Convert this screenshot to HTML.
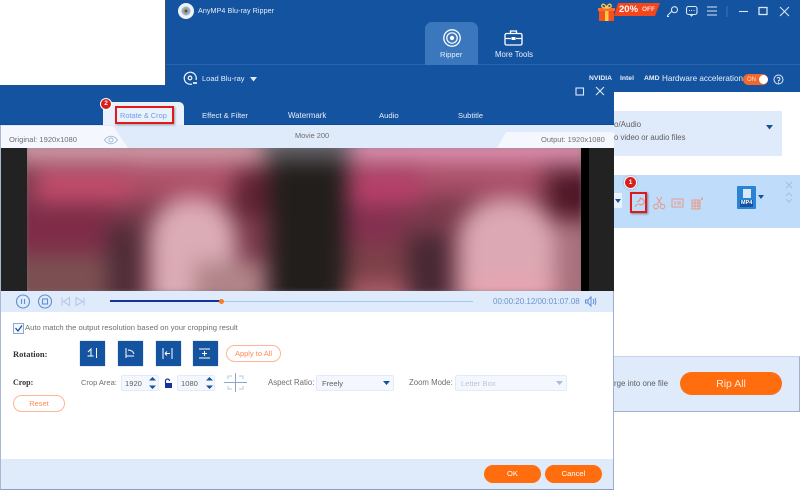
<!DOCTYPE html>
<html><head><meta charset="utf-8">
<style>
html,body{margin:0;padding:0;width:800px;height:490px;overflow:hidden;background:#fff}
body{font-family:"Liberation Sans",sans-serif;font-size:7.6px;color:#5f5f5f;position:relative;filter:blur(.2px)}
.a,.t{position:absolute}
.t{white-space:nowrap;line-height:10px}
.w{color:#e8eefa}
.btn{position:absolute;background:#ff6d0e;border-radius:12px;color:#fff;text-align:center}
.ob{position:absolute;border:1px solid #ffb594;border-radius:10px;color:#ff8a55;text-align:center;background:#fff;box-sizing:border-box}
.rot{position:absolute;width:25px;height:25px;top:341px;background:#14539f;box-shadow:0 0 1px #7f9fca}
.inp{position:absolute;background:#f4f8fe;border:1px solid #e2ebf8;box-sizing:border-box;border-radius:2px;color:#5f5f5f}
svg{position:absolute;overflow:visible}
.v div{position:absolute}
</style></head><body>

<!-- main window -->
<div class="a" style="left:165px;top:0;width:635px;height:92px;background:#14539f"></div>
<div class="a" style="left:165px;top:0;width:1px;height:85px;background:#3f4f68"></div>
<div class="a" style="left:166px;top:64px;width:634px;height:1px;background:#2a66ae"></div>
<div class="a" style="left:425px;top:22px;width:53px;height:43px;background:#3a77bd;border-radius:7px 7px 0 0"></div>
<!-- logo -->
<svg style="left:178px;top:3px" width="16" height="16" viewBox="0 0 16 16"><circle cx="8" cy="8" r="8" fill="#eef3f8"/><circle cx="8" cy="8" r="4.5" fill="#8fb2d8"/><circle cx="8" cy="8" r="2.5" fill="#c98a2c"/><circle cx="8" cy="8" r="1.2" fill="#14539f"/></svg>
<div class="t w" style="left:198px;top:6px;font-size:7.200px;letter-spacing:.05px">AnyMP4 Blu-ray Ripper</div>
<!-- ripper icon -->
<svg style="left:442px;top:29px" width="20" height="18" viewBox="0 0 20 18" fill="none" stroke="#fff"><circle cx="10" cy="9" r="8.2" stroke-width="1.3"/><circle cx="10" cy="9" r="5.2" stroke-width="1.2"/><circle cx="10" cy="9" r="2.2" fill="#fff" stroke="none"/></svg>
<div class="t w" style="left:440px;top:50px;font-size:7.600px">Ripper</div>
<!-- tools icon -->
<svg style="left:504px;top:30px" width="19" height="16" viewBox="0 0 19 16" fill="none" stroke="#fff" stroke-width="1.3"><rect x="1" y="3.5" width="17" height="11.5" rx="1.5"/><path d="M6.5 3.500V1h6v2.500M1 8.500h6M12 8.500h6"/><rect x="7.500" y="7" width="4" height="3" fill="#fff" stroke="none"/></svg>
<div class="t w" style="left:495px;top:50px;font-size:7.800px">More Tools</div>
<!-- gift -->
<svg style="left:598px;top:3px" width="18" height="18" viewBox="0 0 18 18"><rect x="1" y="6" width="15" height="12" fill="#f4511e"/><rect x="7" y="3" width="3.500" height="15" fill="#ffcb45"/><rect x="0" y="5" width="17" height="3" fill="#ff6b2c"/><path d="M8.500 5C5 5 3 4 4 2s4 0 4.500 3c.5-3 3.500-5 4.500-3s-1 3-4.500 3z" fill="none" stroke="#ffcb45" stroke-width="1.300"/></svg>
<svg style="left:614px;top:3px" width="46" height="13" viewBox="0 0 46 13"><path d="M4 0H46L41 13H0z" fill="#f4451c"/></svg>
<div class="t" style="left:619px;top:3px;font-size:9.500px;font-weight:bold;color:#fff;line-height:13px">20%</div>
<div class="t" style="left:642px;top:5px;font-size:6.500px;font-weight:bold;color:#ffe3d6">OFF</div>
<!-- top icons -->
<svg style="left:665px;top:5px" width="135" height="16" viewBox="0 0 135 16" fill="none" stroke="#d9e6f6" stroke-width="1.100">
<path d="M2.500 10.500l4-4M2.500 10.500v1h1.500M6.500 4.500a3 3 0 1 1 2 3 3 3 0 0 1-2-3z"/>
<rect x="21.500" y="1.500" width="10.500" height="8" rx="2"/><path d="M25 9.500l1.500 1.500 1.500-1.500M24 5.500h1M26 5.500h1M28.500 5.500h1"/>
<path d="M42 2h10M42 6h10M42 10h10"/>
<path d="M62 1v11" stroke="#3b73b5"/>
<path d="M74 6.500h9"/><rect x="94" y="2.500" width="8" height="7" stroke-width="1.300"/><path d="M115 2l9 9M124 2l-9 9"/></svg>
<!-- load bar -->
<svg style="left:183px;top:71px" width="16" height="15" viewBox="0 0 16 15" fill="none" stroke="#e6eef8" stroke-width="1.300"><path d="M13 9A6 6 0 1 0 9 13"/><circle cx="7" cy="7" r="1.800"/><path d="M10 12h4" stroke-width="1.800"/></svg>
<div class="t w" style="left:202px;top:74px;font-size:7.500px">Load Blu-ray</div>
<svg style="left:250px;top:77px" width="7" height="5"><path d="M0 0h7L3.500 4.500z" fill="#dfe9f7"/></svg>
<div class="t" style="left:589px;top:74px;font-size:6.800px;font-weight:bold;color:#e8eff9">NVIDIA</div>
<div class="t" style="left:620px;top:74px;font-size:6.800px;font-weight:bold;color:#e8eff9">Intel</div>
<div class="t" style="left:644px;top:74px;font-size:6.800px;font-weight:bold;color:#e8eff9">AMD</div>
<div class="t w" style="left:662px;top:74px;font-size:8.100px">Hardware acceleration</div>
<div class="a" style="left:743px;top:74px;width:25px;height:11px;border-radius:6px;background:#f2682a"></div>
<div class="a" style="left:759px;top:75px;width:9px;height:9px;border-radius:50%;background:#fff"></div>
<div class="t" style="left:747px;top:75px;font-size:6px;color:#ffe3d6">ON</div>
<svg style="left:773px;top:74px" width="11" height="11" fill="none" stroke="#dfe9f7"><circle cx="5.500" cy="5.500" r="4.500"/><path d="M4 4.500a1.500 1.500 0 1 1 1.500 2V7.500M5.500 8.300v1"/></svg>

<!-- main content -->
<div class="a" style="left:614px;top:92px;width:186px;height:320px;background:#fff"></div>
<div class="a" style="left:614px;top:111px;width:168px;height:45px;background:#dfeafb"></div>
<div class="t" style="left:614px;top:120px;font-size:8px">o/Audio</div>
<div class="t" style="left:614px;top:133px;font-size:7.800px">o video or audio files</div>
<svg style="left:766px;top:125px" width="7" height="5"><path d="M0 0h7L3.500 4.500z" fill="#14539f"/></svg>
<div class="a" style="left:614px;top:175px;width:186px;height:53px;background:#c0dcfb"></div>
<div class="a" style="left:614px;top:193px;width:8px;height:15px;background:#eaf2fd"></div>
<svg style="left:615px;top:199px" width="6" height="4"><path d="M0 0h6L3 4z" fill="#14539f"/></svg>
<!-- red box 1 -->
<div class="a" style="left:630px;top:192px;width:17px;height:21px;box-sizing:border-box;border:2px solid #e01a1a;box-shadow:1px 1px 2px rgba(0,0,0,.4)"></div>
<svg style="left:634px;top:197px" width="11" height="11" fill="none" stroke="#e58a78"><path d="M3 5l2.500-1.500 1-2.500 2.500 1.500 1.500 1.500-1 3-2.500 1-2.500-1M1 9.500l2.500-2.500"/></svg>
<div class="a" style="left:624px;top:176px;width:11px;height:11px;border-radius:50%;background:#d91e1e;border:1px solid #fff;color:#fff;font-size:6.500px;line-height:11px;text-align:center;font-weight:bold;box-shadow:0 0 2px rgba(0,0,0,.3)">1</div>
<svg style="left:653px;top:196px" width="70" height="14" fill="none" stroke="#e79a88"><circle cx="3" cy="10.500" r="2.300"/><circle cx="9.500" cy="10.500" r="2.300"/><path d="M4 8.500L9 1M8.500 8.500L3.500 1"/><rect x="19" y="3" width="11" height="8"/><path d="M22 5v4M25 5v4M27 5v4"/><rect x="39" y="4" width="8" height="9"/><path d="M39 7h8M39 10h8M42 4v9M45 4v9M48 3h2M49 1v3"/></svg>
<div class="a" style="left:737px;top:186px;width:19px;height:23px;background:#2c83d3;border-radius:1px"></div>
<div class="a" style="left:743px;top:189px;width:8px;height:9px;background:#d7e8f9"></div>
<div class="t" style="left:740px;top:200px;font-size:5.500px;font-weight:bold;color:#fff;line-height:7px;background:#14539f;padding:0 1px">MP4</div>
<svg style="left:758px;top:195px" width="6" height="4"><path d="M0 0h6L3 4z" fill="#14539f"/></svg>
<svg style="left:785px;top:181px" width="9" height="24" fill="none" stroke="#a8bdd6"><path d="M1 1l6 6M7 1l-6 6M1 15l3-3 3 3M1 18l3 3 3-3"/></svg>
<div class="a" style="left:614px;top:356px;width:185px;height:54px;background:#dfeafb;border-top:1px solid #c4d4ea;border-bottom:1px solid #9fb0cf;border-right:1px solid #9fb0cf"></div>
<div class="t" style="left:614px;top:379px;font-size:7.900px">rge into one file</div>
<div class="btn" style="left:680px;top:372px;width:102px;height:23px;line-height:24px;font-size:10.500px;color:#ffeadd">Rip All</div>

<!-- dialog -->
<div class="a" style="left:0;top:85px;width:614px;height:405px;background:#fff;box-sizing:border-box;border-right:1px solid #9fb0cf;border-left:1px solid #a9b7d2;border-bottom:1px solid #8e9fbf"></div>
<div class="a" style="left:0;top:85px;width:614px;height:40px;background:#14539f"></div>
<svg style="left:575px;top:87px" width="30" height="9" fill="none" stroke="#dfe9f7" stroke-width="1.100"><rect x="1" y="1" width="7.500" height="7"/><path d="M21 0l8 8M29 0l-8 8"/></svg>
<div class="a" style="left:1px;top:125px;width:613px;height:23px;background:#dfeafb"></div>
<div class="a" style="left:0;top:124px;width:614px;height:1px;background:#0f4a94"></div>
<svg style="left:1px;top:126px" width="613" height="22"><path d="M0 0H112L127 22H0z" fill="#f4f8fe"/><path d="M505 6H613V22H496z" fill="#f4f8fe"/></svg>
<div class="a" style="left:103px;top:102px;width:81px;height:23px;background:#e9f1fc;border-radius:0 5px 0 0"></div>
<div class="t" style="left:120px;top:111px;font-size:7.400px;color:#6e9fe0">Rotate &amp; Crop</div>
<div class="a" style="left:115px;top:106px;width:59px;height:18px;box-sizing:border-box;border:2px solid #e01a1a;box-shadow:1px 1px 2px rgba(0,0,0,.35)"></div>
<div class="a" style="left:100px;top:98px;width:10px;height:10px;border-radius:50%;background:#d91e1e;border:1px solid #fff;color:#fff;font-size:6.500px;line-height:10px;text-align:center;font-weight:bold">2</div>
<div class="t w" style="left:202px;top:111px;font-size:7.700px">Effect &amp; Filter</div>
<div class="t w" style="left:288px;top:111px;font-size:7.900px">Watermark</div>
<div class="t w" style="left:379px;top:111px;font-size:7.700px">Audio</div>
<div class="t w" style="left:458px;top:111px;font-size:7.500px">Subtitle</div>
<div class="t" style="left:9px;top:135px;color:#6e6e6e">Original: 1920x1080</div>
<svg style="left:104px;top:135px" width="14" height="10" fill="none" stroke="#a8bdd6"><path d="M.5 5C4 0 10 0 13.500 5 10 10 4 10 .5 5z"/><circle cx="7" cy="5" r="2"/></svg>
<div class="t" style="left:295px;top:131px;font-size:7.400px;color:#6e6e6e">Movie 200</div>
<div class="t" style="left:541px;top:135px;font-size:7.500px;color:#6e6e6e">Output: 1920x1080</div>

<!-- video -->
<div class="a" style="left:1px;top:148px;width:613px;height:143px;background:#222;overflow:hidden">
 <div class="a" style="left:26px;top:0;width:554px;height:143px;overflow:hidden;background:#6a3442">
  <div class="a v" style="left:-27px;top:-148px;width:800px;height:490px;filter:blur(11px)">
   <div style="left:-10px;top:110px;width:640px;height:220px;background:#7a3a4c"></div>
   <div style="left:-10px;top:115px;width:280px;height:48px;background:#d099a6"></div>
   <div style="left:345px;top:115px;width:270px;height:48px;background:#dc90ae"></div>
   <div style="left:35px;top:170px;width:100px;height:32px;background:#c24c6c"></div>
   <div style="left:130px;top:165px;width:125px;height:34px;background:#ae5068"></div>
   <div style="left:-10px;top:205px;width:120px;height:48px;background:#7e2c48"></div>
   <div style="left:-10px;top:255px;width:120px;height:75px;background:#7c5052"></div>
   <div style="left:108px;top:225px;width:32px;height:100px;background:#4c2c36"></div>
   <div style="left:235px;top:170px;width:38px;height:46px;background:#5e2232"></div>
   <div style="left:150px;top:198px;width:86px;height:130px;border-radius:40px 40px 5px 5px;background:#dcacb6"></div>
   <div style="left:195px;top:262px;width:70px;height:60px;background:#b08488"></div>
   <div style="left:270px;top:160px;width:76px;height:170px;background:#221e1c"></div>
   <div style="left:263px;top:115px;width:88px;height:45px;background:#66646a"></div>
   <div style="left:350px;top:170px;width:72px;height:34px;background:#b8406a"></div>
   <div style="left:420px;top:165px;width:122px;height:30px;background:#ac4f6a"></div>
   <div style="left:346px;top:205px;width:56px;height:38px;background:#843050"></div>
   <div style="left:346px;top:245px;width:64px;height:34px;background:#7c4048"></div>
   <div style="left:346px;top:282px;width:64px;height:48px;background:#ad5e6a"></div>
   <div style="left:408px;top:235px;width:40px;height:70px;background:#462833"></div>
   <div style="left:458px;top:198px;width:98px;height:130px;border-radius:44px 44px 0 0;background:#dca8b3"></div>
   <div style="left:470px;top:276px;width:86px;height:50px;background:#e6a4b0"></div>
   <div style="left:550px;top:175px;width:60px;height:40px;background:#4e1626"></div>
   <div style="left:555px;top:222px;width:60px;height:105px;background:#a8707c"></div>
  </div>
  <div class="a" style="left:0;top:0;width:554px;height:143px;box-shadow:inset 0 0 5px rgba(120,120,120,.55)"></div>
 </div>
 <div class="a" style="left:580px;top:0;width:8px;height:143px;background:#000"></div>
</div>

<!-- controls -->
<div class="a" style="left:1px;top:291px;width:612px;height:21px;background:#dfeafb"></div>
<svg style="left:16px;top:294px" width="80" height="15" fill="none" stroke="#5f8fd0" stroke-width="1.100"><circle cx="7" cy="7.500" r="6.500"/><path d="M5.500 5v5M8.500 5v5"/><circle cx="29" cy="7.500" r="6.500"/><rect x="26.500" y="5" width="5" height="5"/><path d="M46 3.500v8M53.500 3.500v8L47.500 7.500zM60 3.500v8L67 7.500zM68 3.500v8" stroke="#b3c9e8"/></svg>
<div class="a" style="left:110px;top:301px;width:363px;height:1px;background:#9cc8f2"></div>
<div class="a" style="left:110px;top:300px;width:111px;height:2px;background:#14339f"></div>
<div class="a" style="left:219px;top:299px;width:5px;height:5px;border-radius:50%;background:#ff7a1a"></div>
<div class="t" style="left:493px;top:297px;font-size:8px;color:#6c95cc">00:00:20.12/00:01:07.08</div>
<svg style="left:585px;top:296px" width="11" height="11" fill="none" stroke="#5f8fd0"><path d="M.5 4h2.500v3H.5zM3.500 3.500L6 1v9L3.500 7.500M8 3c1 1.500 1 3.500 0 5M10 2c1 2 1 5 0 7"/></svg>

<!-- options -->
<div class="a" style="left:13px;top:323px;width:9px;height:9px;border:1px solid #8fa8cc;background:#f4f8fe"></div>
<svg style="left:15px;top:325px" width="8" height="7" fill="none" stroke="#14539f" stroke-width="1.300"><path d="M.5 3l2.500 3L7 .5"/></svg>
<div class="t" style="left:25px;top:323px;font-size:7.650px;color:#6e6e6e">Auto match the output resolution based on your cropping result</div>
<div class="t" style="left:13px;top:349px;font-family:'Liberation Serif',serif;font-weight:bold;font-size:8.500px;color:#333">Rotation:</div>
<div class="rot" style="left:80px"></div><div class="rot" style="left:118px"></div><div class="rot" style="left:156px"></div><div class="rot" style="left:193px"></div>
<svg style="left:80px;top:341px" width="140" height="25" fill="none" stroke="#fff"><path d="M16.500 7v10M7.500 15h6M8 11l3-3v7"/><path d="M46 7v10M46 15h8M48 9c3 0 5 1 6 4"/><path d="M83 7v11M92 7v11M85 12.500h5M85 12.500l2-2M85 12.500l2 2"/><path d="M119 8h11M119 17h11M124.500 10v5M122 12.500h5"/></svg>
<div class="ob" style="left:226px;top:345px;width:55px;height:17px;line-height:15px;font-size:7.500px">Apply to All</div>
<div class="t" style="left:13px;top:378px;font-family:'Liberation Serif',serif;font-weight:bold;font-size:8px;color:#333">Crop:</div>
<div class="t" style="left:81px;top:378px;font-size:7.500px;color:#6e6e6e">Crop Area:</div>
<div class="inp" style="left:121px;top:375px;width:38px;height:16px;line-height:15px;padding-left:3px">1920</div>
<svg style="left:149px;top:377px" width="7" height="12"><path d="M3.500 0L7 3.500H0zM0 8.500h7L3.500 12z" fill="#14539f"/></svg>
<svg style="left:164px;top:379px" width="8" height="9"><path d="M1.500 4V2a2 2 0 0 1 4 0" fill="none" stroke="#14339f" stroke-width="1.200"/><rect x="1" y="4" width="7" height="5" fill="#14339f"/></svg>
<div class="inp" style="left:177px;top:375px;width:38px;height:16px;line-height:15px;padding-left:3px">1080</div>
<svg style="left:206px;top:377px" width="7" height="12"><path d="M3.500 0L7 3.500H0zM0 8.500h7L3.500 12z" fill="#14539f"/></svg>
<svg style="left:224px;top:373px" width="23" height="19" fill="none" stroke="#b9c8de"><path d="M4 6V3h4M15 3h4v3M4 13v3h4M15 16h4v-3"/><path d="M11.500 0v19M0 9.500h23" stroke="#8ea7c9"/></svg>
<div class="t" style="left:268px;top:378px;font-size:7.800px;color:#6e6e6e">Aspect Ratio:</div>
<div class="inp" style="left:316px;top:375px;width:78px;height:16px;line-height:15px;padding-left:5px">Freely</div>
<svg style="left:383px;top:381px" width="7" height="4"><path d="M0 0h7L3.500 4z" fill="#14539f"/></svg>
<div class="t" style="left:409px;top:378px;font-size:7.800px;color:#6e6e6e">Zoom Mode:</div>
<div class="inp" style="left:455px;top:375px;width:112px;height:16px;line-height:15px;padding-left:5px;color:#bcc4cf">Letter Box</div>
<svg style="left:556px;top:381px" width="7" height="4"><path d="M0 0h7L3.500 4z" fill="#a8bdd6"/></svg>
<div class="ob" style="left:13px;top:395px;width:52px;height:17px;line-height:15px;font-size:7.500px">Reset</div>

<!-- footer -->
<div class="a" style="left:1px;top:459px;width:612px;height:30px;background:#dfeafb"></div>
<div class="btn" style="left:484px;top:465px;width:57px;height:18px;line-height:18px;font-size:7.600px;border-radius:9px">OK</div>
<div class="btn" style="left:545px;top:465px;width:57px;height:18px;line-height:18px;font-size:7.600px;border-radius:9px">Cancel</div>
</body></html>
